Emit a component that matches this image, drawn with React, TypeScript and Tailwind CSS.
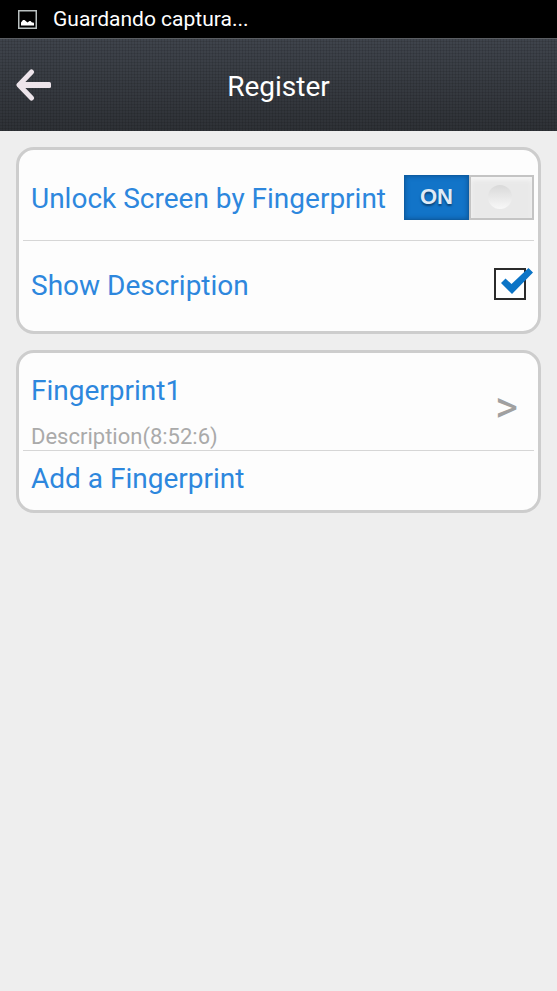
import { useState } from "react";
import type { ReactNode } from "react";

function StatusBar() {
  return (
    <div className="flex h-[38px] items-center gap-4 bg-black pl-[18px] text-white">
      <svg width="19" height="19" viewBox="0 0 19 19" aria-hidden="true">
        <rect x="0.750" y="0.750" width="17.500" height="17.500" fill="none" stroke="#b9c0c0" strokeWidth="1.500" />
        <path d="M3 15.500v-3l2-2.500h1.500l3 2.500 2-1.500h1l1.500 1.500h1.500l.5 1v2z" fill="#fff" />
      </svg>
      <span className="text-[21px] leading-7">Guardando captura...</span>
    </div>
  );
}

function Header() {
  return (
    <header className="grid h-[93px] grid-cols-[1fr_auto_1fr] items-center border-t border-[#5b5e63] bg-[repeating-linear-gradient(90deg,#0000_0_2px,#0000001a_2px_3px),repeating-linear-gradient(#0000_0_2px,#0000001a_2px_3px),linear-gradient(#3f444c,#2e3136)] px-4 pt-1 text-white">
      <button type="button" aria-label="Back" className="justify-self-start pb-1">
        <svg width="36" height="32" viewBox="0 0 36 32" fill="none" aria-hidden="true">
          <path
            d="M15.500 3 3 16l12.500 13"
            stroke="#ede4ea"
            strokeWidth="5"
            strokeLinecap="round"
            strokeLinejoin="round"
          />
          <rect x="3" y="13" width="32" height="6" rx="1.500" fill="#ede4ea" />
        </svg>
      </button>
      <h1 className="text-[28px] leading-8">Register</h1>
    </header>
  );
}

function Card({ children }: { children: ReactNode }) {
  return (
    <section className="rounded-[18px] border-3 border-[#cdcdcd] bg-[#fdfdfd] px-1">
      {children}
    </section>
  );
}

export default function App() {
  const [unlock, setUnlock] = useState(true);
  const [showDescription, setShowDescription] = useState(true);

  return (
    <div className="min-h-screen bg-[#eeeeee] font-[Roboto,sans-serif]">
      <StatusBar />
      <Header />
      <main className="flex flex-col gap-4 p-4 text-[28px] leading-8 text-[#2d87dd]">
        <Card>
          <div className="flex h-[91px] items-center justify-between border-b border-[#d6d6d6] pt-1 pl-2">
            <label htmlFor="unlock" className="pt-1">
              Unlock Screen by Fingerprint
            </label>
            <label className="relative grid h-[45px] w-[130px] shrink-0 cursor-pointer grid-cols-2">
              <input
                id="unlock"
                type="checkbox"
                role="switch"
                checked={unlock}
                onChange={(e) => setUnlock(e.target.checked)}
                className="absolute inset-0 size-full cursor-pointer appearance-none"
              />
              <span className="flex items-center justify-center border border-[#0d5da3] bg-[#1274c8] font-['Liberation_Sans',sans-serif] text-[22px] font-bold text-[#dfeaf5] inset-shadow-[0_0_5px_#0b5394] text-shadow-[0_2px_2px_#0a4478]">
                {unlock ? "ON" : "OFF"}
              </span>
              <span className="flex items-center justify-center border-2 border-[#c4c4c4] bg-[#e9e9e9] pr-1 inset-shadow-[0_3px_4px_#f6f6f6]">
                <span className="size-6 rounded-full bg-linear-to-b from-[#d9d9d9] to-[#f8f8f8]" />
              </span>
            </label>
          </div>
          <div className="flex h-[90px] items-center justify-between pl-2">
            <label htmlFor="description">Show Description</label>
            <span className="relative mr-2 mb-1 size-8">
              <input
                id="description"
                type="checkbox"
                checked={showDescription}
                onChange={(e) => setShowDescription(e.target.checked)}
                className="block size-8 appearance-none border-2 border-[#2b2b2b] bg-white"
              />
              {showDescription && (
                <svg
                  width="40"
                  height="32"
                  viewBox="0 0 40 32"
                  className="pointer-events-none absolute top-0 left-0"
                  aria-hidden="true"
                >
                  <path d="m7 15 4.500-4.500 6 5.500L34.500 0l4.500 4.500L18 26z" fill="#0b74c6" />
                </svg>
              )}
            </span>
          </div>
        </Card>

        <Card>
          <button
            type="button"
            className="flex w-full items-center justify-between border-b border-[#d6d6d6] pt-[22px] pr-4 pl-2 text-left"
          >
            <span className="flex flex-col gap-4">
              <span>Fingerprint1</span>
              <span className="text-[22px] leading-[27px] text-[#aaaaaa]">Description(8:52:6)</span>
            </span>
            <span className="pb-3 text-[44px] leading-10 text-[#a0a0a0]">&gt;</span>
          </button>
          <button type="button" className="block h-[59px] w-full pb-1 pl-2 text-left">
            Add a Fingerprint
          </button>
        </Card>
      </main>
    </div>
  );
}
